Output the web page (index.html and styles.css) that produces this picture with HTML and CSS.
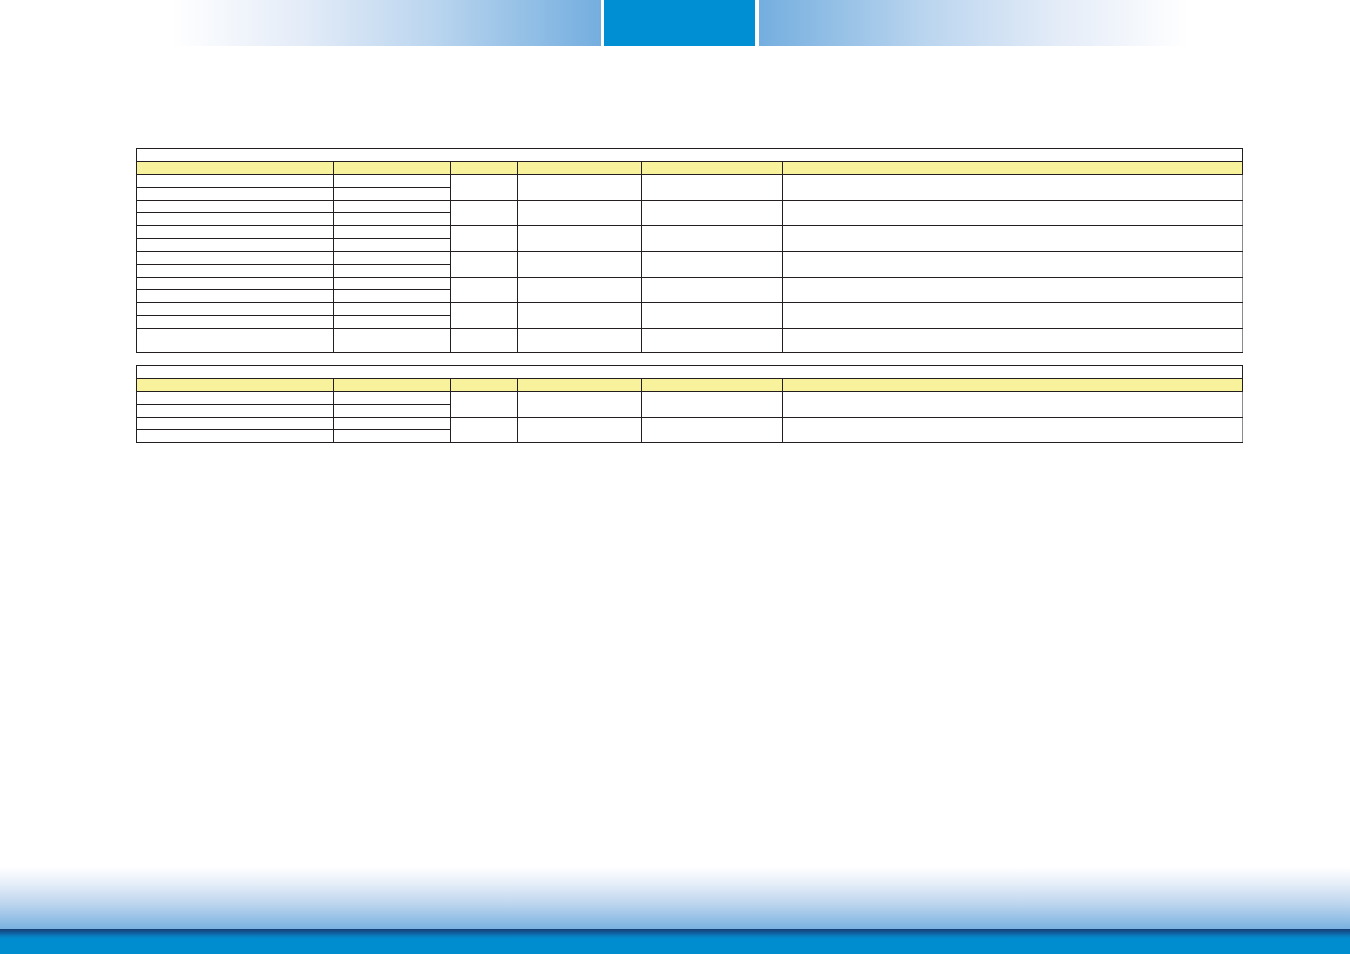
FILE: index.html
```html
<!DOCTYPE html>
<html lang="en">
<head>
<meta charset="utf-8">
<title>Pin table</title>
<link rel="stylesheet" href="styles.css">
</head>
<body>
<div class="page">
  <header class="topbar">
    <div class="bar bar-left"></div>
    <div class="bar bar-mid"></div>
    <div class="bar bar-right"></div>
  </header>
  <main class="content">
    <table class="grid">
      <colgroup>
        <col class="c1"><col class="c2"><col class="c3"><col class="c4"><col class="c5"><col class="c6">
      </colgroup>
      <tr class="title"><td colspan="6"></td></tr>
      <tr class="head"><td></td><td></td><td></td><td></td><td></td><td class="last"></td></tr>
      <tr class="r"><td></td><td></td><td rowspan="2"></td><td rowspan="2"></td><td rowspan="2"></td><td rowspan="2" class="last"></td></tr>
      <tr class="r"><td></td><td></td></tr>
      <tr class="r"><td></td><td></td><td rowspan="2"></td><td rowspan="2"></td><td rowspan="2"></td><td rowspan="2" class="last"></td></tr>
      <tr class="r"><td></td><td></td></tr>
      <tr class="r"><td></td><td></td><td rowspan="2"></td><td rowspan="2"></td><td rowspan="2"></td><td rowspan="2" class="last"></td></tr>
      <tr class="r"><td></td><td></td></tr>
      <tr class="r"><td></td><td></td><td rowspan="2"></td><td rowspan="2"></td><td rowspan="2"></td><td rowspan="2" class="last"></td></tr>
      <tr class="r"><td></td><td></td></tr>
      <tr class="r"><td></td><td></td><td rowspan="2"></td><td rowspan="2"></td><td rowspan="2"></td><td rowspan="2" class="last"></td></tr>
      <tr class="r"><td></td><td></td></tr>
      <tr class="r"><td></td><td></td><td rowspan="2"></td><td rowspan="2"></td><td rowspan="2"></td><td rowspan="2" class="last"></td></tr>
      <tr class="r"><td></td><td></td></tr>
      <tr class="tall"><td></td><td></td><td></td><td></td><td></td><td class="last"></td></tr>
    </table>

    <table class="grid">
      <colgroup>
        <col class="c1"><col class="c2"><col class="c3"><col class="c4"><col class="c5"><col class="c6">
      </colgroup>
      <tr class="title"><td colspan="6"></td></tr>
      <tr class="head"><td></td><td></td><td></td><td></td><td></td><td class="last"></td></tr>
      <tr class="r"><td></td><td></td><td rowspan="2"></td><td rowspan="2"></td><td rowspan="2"></td><td rowspan="2" class="last"></td></tr>
      <tr class="r"><td></td><td></td></tr>
      <tr class="r"><td></td><td></td><td rowspan="2"></td><td rowspan="2"></td><td rowspan="2"></td><td rowspan="2" class="last"></td></tr>
      <tr class="r"><td></td><td></td></tr>
    </table>
  </main>
  <footer class="footer">
    <div class="fade"></div>
    <div class="band"></div>
  </footer>
</div>
</body>
</html>
```

FILE: styles.css
```css
html, body {
  margin: 0;
  padding: 0;
  background: #ffffff;
  font-family: "Liberation Sans", Arial, sans-serif;
}

.page {
  width: 1350px;
  height: 954px;
  display: flex;
  flex-direction: column;
  overflow: hidden;
}

.topbar {
  display: flex;
  height: 46px;
  padding-left: 172px;
  flex: none;
}

.bar {
  height: 46px;
}

.bar-left {
  width: 429px;
  background: linear-gradient(to right, rgba(255,255,255,0) 0%, #e4ecf8 30%, #bcd6ef 60%, #74aedf 100%);
}

.bar-mid {
  width: 151px;
  margin-left: 3px;
  background: #008fd3;
}

.bar-right {
  width: 429px;
  margin-left: 4px;
  background: linear-gradient(to left, rgba(255,255,255,0) 0%, #e4ecf8 30%, #bcd6ef 60%, #74aedf 100%);
}

.content {
  flex: 1;
  padding: 102px 0 0 136px;
  display: flex;
  flex-direction: column;
  gap: 12px;
}

.grid {
  border-collapse: collapse;
  table-layout: fixed;
  width: 1106px;
}

.grid td {
  border: 1px solid #231f20;
  padding: 0;
}

.grid td.last {
  border-right-color: #8c8c8c;
}

.c1 { width: 197px; }
.c2 { width: 117px; }
.c3 { width: 67px; }
.c4 { width: 124px; }
.c5 { width: 141px; }
.c6 { width: 460px; }

.grid tr.title td { height: 12px; border-right-color: #231f20; }
.grid tr.head td { height: 12px; background: #f8f29c; border-right-color: #231f20; }
.grid tr.r td { height: 11.84px; }
.grid tr.tall td { height: 23px; }

.footer {
  flex: none;
  height: 87px;
  display: flex;
  flex-direction: column;
}

.fade {
  height: 62px;
  background: linear-gradient(to bottom, #ffffff 0%, #e8eff9 25%, #bcd5ee 60%, #79b1e0 100%);
}

.band {
  height: 25px;
  background: linear-gradient(to bottom, #163f74 0px, #0f5f9e 4px, #0a7dbf 7px, #008dd0 10px, #008dd0 100%);
}
```
